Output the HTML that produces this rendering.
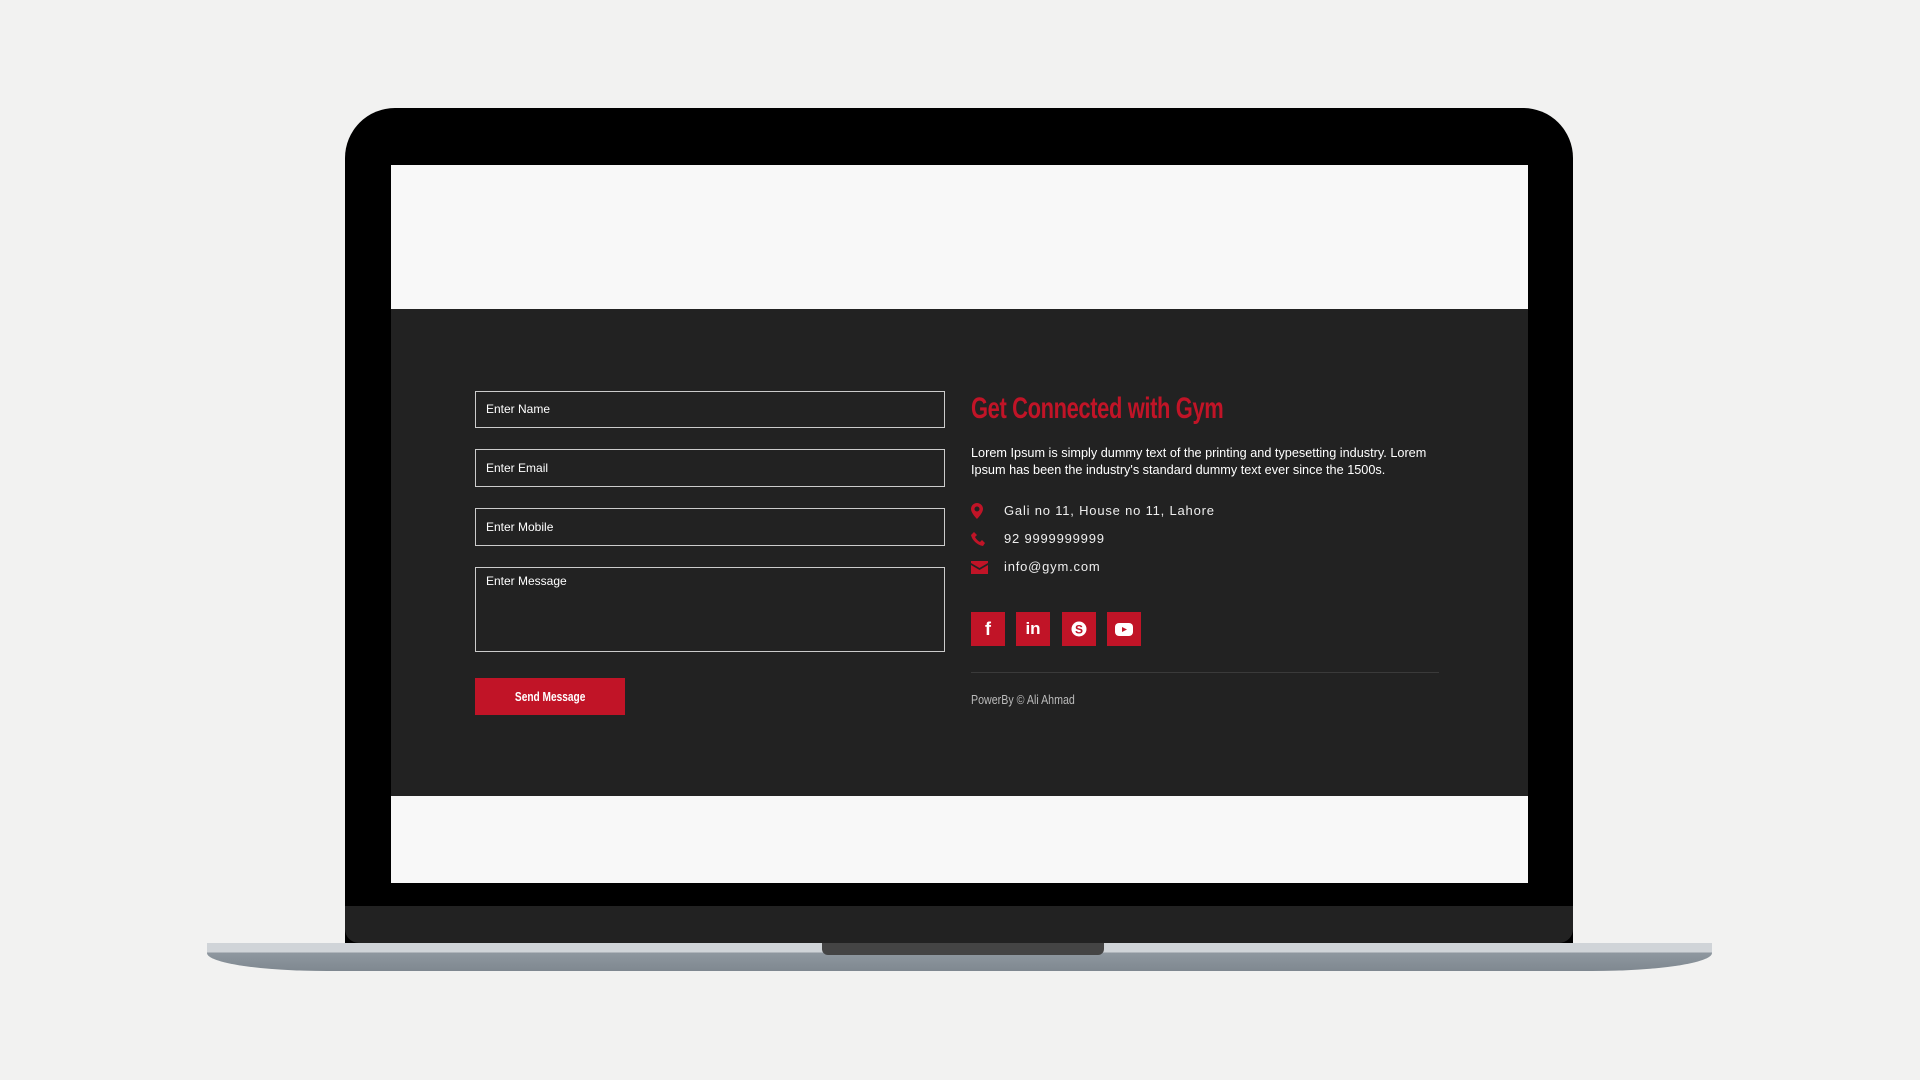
<!DOCTYPE html>
<html><head><meta charset="utf-8"><style>
*{box-sizing:border-box;margin:0;padding:0}
body{width:1920px;height:1080px;background:#f2f2f1;position:relative;overflow:hidden;font-family:"Liberation Sans",sans-serif}
.abs{position:absolute}
.lap{left:345px;top:108px;width:1228px;height:835px;background:#000;border-radius:50px 50px 0 0}
.chin{left:345px;top:906px;width:1228px;height:37px;background:#222;border-radius:0 0 14px 14px}
.screen{left:391px;top:165px;width:1137px;height:718px;background:#f8f8f8}
.dark{left:391px;top:309px;width:1137px;height:487px;background:#222}
.base{left:207px;top:943px;width:1505px;height:28px;background:linear-gradient(#d0d4d8 0,#d0d4d8 9px,#8e979f 10px,#7f8890 100%);border-radius:0 0 120px 120px/0 0 18px 18px}
.notch{left:822px;top:943px;width:282px;height:12px;background:#444;border-radius:0 0 6px 6px}
.in{left:475px;width:470px;border:1px solid #ccc;color:#fff;font-size:12px;padding-left:10px}
.btn{left:475px;top:678px;width:150px;height:37px;background:#c11427;color:#fff;text-align:center;line-height:37px}
.btn span{display:inline-block;font-weight:bold;font-size:13px;transform:scaleX(0.78)}
h1{position:absolute;left:971px;top:392px;color:#c11427;font-weight:bold;font-size:30px;letter-spacing:-0.5px;transform:scaleX(0.73);transform-origin:0 0;white-space:nowrap}
.p{left:971px;top:445px;width:465px;color:#fff;font-size:12.7px;line-height:17px}
.c{left:1004px;color:#eee;font-size:13px;letter-spacing:0.8px}
.ic{left:971px;fill:#c11427}
.s{top:612px;width:34px;height:34px;background:#c11427;color:#fff;font-weight:bold;text-align:center;line-height:34px;font-size:18px}
</style></head><body>
<div class="abs lap"></div>
<div class="abs chin"></div>
<div class="abs screen"></div>
<div class="abs dark"></div>
<div class="abs base"></div>
<div class="abs notch"></div>
<div class="abs in" style="top:391px;height:37px;line-height:35px">Enter Name</div>
<div class="abs in" style="top:449px;height:38px;line-height:36px">Enter Email</div>
<div class="abs in" style="top:508px;height:38px;line-height:36px">Enter Mobile</div>
<div class="abs in" style="top:567px;height:85px;padding-top:6px">Enter Message</div>
<div class="abs btn"><span>Send Message</span></div>
<h1>Get Connected with Gym</h1>
<div class="abs p">Lorem Ipsum is simply dummy text of the printing and typesetting industry. Lorem Ipsum has been the industry's standard dummy text ever since the 1500s.</div>
<svg class="abs ic" style="top:503px" width="12" height="16" viewBox="0 0 12 16"><path d="M6 0a6 6 0 0 0-6 6c0 4 6 10 6 10s6-6 6-10a6 6 0 0 0-6-6zm0 8.5a2.5 2.5 0 1 1 0-5 2.5 2.5 0 0 1 0 5z"/></svg>
<svg class="abs ic" style="top:532px" width="14" height="14" viewBox="0 0 14 14"><path d="M3 0l3 3-2 2c1 2 3 4 5 5l2-2 3 3-2 3C6 13 1 8 0 3z"/></svg>
<svg class="abs ic" style="top:561px" width="17" height="13" viewBox="0 0 17 13"><path d="M0 0h17v2L8.5 7 0 2zM0 4l8.5 5L17 4v9H0z"/></svg>
<div class="abs c" style="top:503px">Gali no 11, House no 11, Lahore</div>
<div class="abs c" style="top:531px">92 9999999999</div>
<div class="abs c" style="top:559px">info@gym.com</div>
<div class="abs s" style="left:971px">f</div>
<div class="abs s" style="left:1016px;font-size:17px">in</div>
<div class="abs s" style="left:1062px"><svg width="16" height="16" viewBox="0 0 16 16" style="margin-top:9px"><circle cx="8" cy="8" r="7.5" fill="#fff"/><text x="8" y="12.5" text-anchor="middle" font-size="12" font-weight="bold" fill="#c11427" font-family="Liberation Sans">S</text></svg></div>
<div class="abs s" style="left:1107px"><svg width="18" height="13" viewBox="0 0 18 13" style="margin-top:11px"><rect width="18" height="13" rx="4" fill="#fff"/><path d="M7 4l5 2.5L7 9z" fill="#c11427"/></svg></div>
<div class="abs" style="left:971px;top:672px;width:468px;height:1px;background:#3a3a3a"></div>
<div class="abs" style="left:971px;top:692px;color:#bbb;font-size:13px;transform:scaleX(0.82);transform-origin:0 0;white-space:nowrap">PowerBy © Ali Ahmad</div>
</body></html>
